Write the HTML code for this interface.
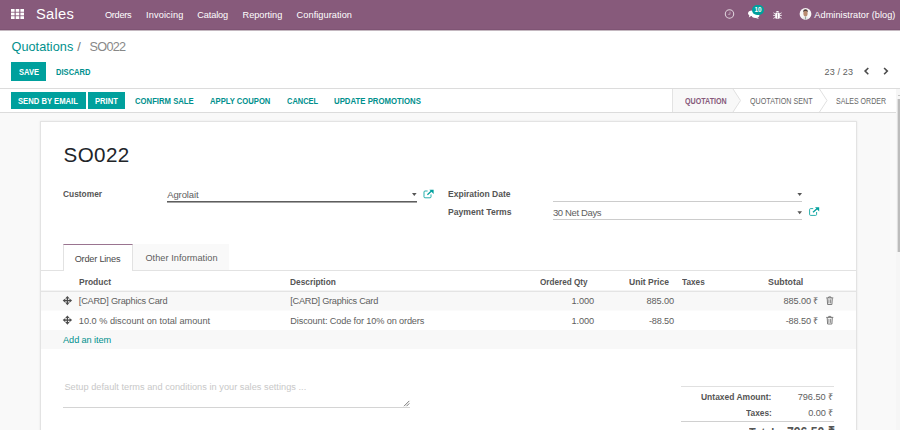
<!DOCTYPE html>
<html><head><meta charset="utf-8">
<style>
html,body{margin:0;padding:0;width:900px;height:430px;overflow:hidden;background:#f9f9f9;font-family:"Liberation Sans",sans-serif;}
.t{position:absolute;white-space:pre;line-height:1;font-family:"Liberation Sans",sans-serif;}
.a{position:absolute;}
</style></head><body>
<!-- navbar -->
<div class="a" style="left:0;top:0;width:900px;height:30px;background:#875A7B"></div>
<div class="a" style="left:0;top:29px;width:900px;height:1px;background:#7f5474"></div>
<div class="a" style="left:0;top:30px;width:900px;height:1px;background:#c4b8c0"></div>
<!-- grid icon -->
<svg class="a" style="left:11px;top:9px" width="13" height="10" viewBox="0 0 13 10">
<g fill="#fff">
<rect x="0" y="0" width="3.6" height="2.8"/><rect x="4.7" y="0" width="3.6" height="2.8"/><rect x="9.4" y="0" width="3.6" height="2.8"/>
<rect x="0" y="3.6" width="3.6" height="2.8"/><rect x="4.7" y="3.6" width="3.6" height="2.8"/><rect x="9.4" y="3.6" width="3.6" height="2.8"/>
<rect x="0" y="7.2" width="3.6" height="2.8"/><rect x="4.7" y="7.2" width="3.6" height="2.8"/><rect x="9.4" y="7.2" width="3.6" height="2.8"/>
</g></svg>
<!-- clock -->
<svg class="a" style="left:724px;top:9px" width="11" height="11" viewBox="0 0 11 11">
<circle cx="5.5" cy="5" r="4.2" fill="none" stroke="rgba(255,255,255,0.72)" stroke-width="1.1"/>
<path d="M6 2.6 L6 5.3 L3.9 5.3" stroke="rgba(255,255,255,0.6)" stroke-width="0.7" fill="none"/>
</svg>
<!-- chat -->
<svg class="a" style="left:748px;top:10px" width="12" height="9" viewBox="0 0 12 9">
<ellipse cx="4.3" cy="3.2" rx="4.2" ry="2.8" fill="#fff"/>
<path d="M1.5 5 L0.8 7.5 L3.8 5.6Z" fill="#fff"/>
<ellipse cx="7.5" cy="5.5" rx="3.8" ry="2.4" fill="#fff"/>
<path d="M9.3 7.2 L11 9 L7 7.8Z" fill="#fff"/>
</svg>
<div class="a" style="left:752px;top:5px;width:12px;height:10px;border-radius:5px;background:#00A09D"></div>
<span class="t" style="left:754.6px;top:7px;font-size:6.4px;font-weight:700;color:#fff;letter-spacing:-0.1px">10</span>
<!-- bug -->
<svg class="a" style="left:773px;top:10px" width="9" height="9" viewBox="0 0 9 9">
<path d="M2.6 2.3 Q4.5 -0.3 6.4 2.3Z" fill="#fff"/>
<rect x="2.2" y="2.7" width="4.6" height="6" rx="1.3" fill="#fff"/>
<path d="M0.4 2.8 L2.2 3.8 M0.2 5.4 L2.2 5.4 M0.4 8.4 L2.2 7.4 M8.6 2.8 L6.8 3.8 M8.8 5.4 L6.8 5.4 M8.6 8.4 L6.8 7.4" stroke="#fff" stroke-width="0.8"/>
<rect x="4.2" y="3.4" width="0.6" height="5" fill="#875A7B"/>
</svg>
<!-- avatar -->
<svg class="a" style="left:799px;top:7px" width="13" height="14" viewBox="0 0 13 14">
<circle cx="6.5" cy="6.9" r="5.9" fill="#f7f5f5"/>
<path d="M4.3 4.6 Q4.4 2.3 6.5 2.3 Q8.6 2.3 8.7 4.6 L8.6 5.2 L4.4 5.2Z" fill="#4a3a34"/>
<ellipse cx="6.5" cy="6.6" rx="2.1" ry="2.9" fill="#b98c70"/>
<path d="M4.5 4.3 Q6.5 3 8.5 4.3 L8.5 3.6 Q6.5 2.2 4.5 3.6Z" fill="#4a3a34"/>
<path d="M5.9 9.5 L7.1 9.5 L7.3 12.6 L5.7 12.6Z" fill="#9aa69c"/>
<path d="M3 11.5 Q4.5 10 5.8 9.8 L5.8 12.6 Z M10 11.5 Q8.5 10 7.2 9.8 L7.2 12.6Z" fill="#e6e6e6"/>
</svg>
<!-- control panel -->
<div class="a" style="left:0;top:31px;width:900px;height:57px;background:#fff"></div>
<div class="a" style="left:11px;top:62px;width:35px;height:19px;background:#00A09D"></div>
<!-- pager chevrons -->
<svg class="a" style="left:862px;top:66px" width="30" height="12" viewBox="0 0 30 12">
<path d="M6.3 2 L3.1 5.1 L6.3 8.2" fill="none" stroke="#4c4c4c" stroke-width="1.6"/>
<path d="M22.1 2 L25.3 5.1 L22.1 8.2" fill="none" stroke="#4c4c4c" stroke-width="1.6"/>
</svg>

<!-- statusbar -->
<div class="a" style="left:0;top:88px;width:896px;height:23px;background:#fff;border-top:1px solid #dcdcdc;border-bottom:1px solid #dcdcdc"></div>
<div class="a" style="left:11px;top:92px;width:75px;height:17px;background:#00A09D"></div>
<div class="a" style="left:88px;top:92px;width:37px;height:17px;background:#00A09D"></div>
<!-- status arrows -->
<svg class="a" style="left:672px;top:89px" width="224" height="23" viewBox="0 0 224 23">
<path d="M1 0 L61 0 L68.5 11.5 L61 23 L1 23Z" fill="#f8f8f8"/>
<path d="M0.5 0 L0.5 23" stroke="#e3e3e3" stroke-width="1"/>
<path d="M61 0 L68.5 11.5 L61 23" fill="none" stroke="#e0e0e0" stroke-width="1"/>
<path d="M147.5 0 L155 11.5 L147.5 23" fill="none" stroke="#e0e0e0" stroke-width="1"/>
</svg>

<!-- scrollbar -->
<div class="a" style="left:896px;top:89px;width:4px;height:341px;background:#f6f6f6"></div>
<div class="a" style="left:896px;top:88px;width:4px;height:1px;background:#dcdcdc"></div>
<div class="a" style="left:898px;top:95px;width:2px;height:1px;background:#c4c4c4"></div>
<div class="a" style="left:898px;top:99px;width:2px;height:153px;background:#bcbcbc"></div>
<div class="a" style="left:897px;top:99px;width:1px;height:153px;background:#e0e0e0"></div>

<!-- sheet -->
<div class="a" style="left:40px;top:121px;width:815px;height:320px;background:#fff;border:1px solid #e3e3e3;box-shadow:0 0 2px rgba(0,0,0,0.08)"></div>
<!-- fields -->
<div class="a" style="left:167px;top:201px;width:250px;height:1px;background:#5e5e5e"></div><div class="a" style="left:167px;top:202px;width:250px;height:1px;background:#a4a4a4"></div>
<div class="a" style="left:553px;top:201px;width:249px;height:1px;background:#ccc"></div>
<div class="a" style="left:553px;top:219px;width:249px;height:1px;background:#ccc"></div>
<svg class="a" style="left:0;top:0" width="900" height="430" viewBox="0 0 900 430">
<path d="M412 193 L416.6 193 L414.3 196Z" fill="#555"/>
<path d="M797.4 193 L802 193 L799.7 196Z" fill="#555"/>
<path d="M797.4 211.3 L802 211.3 L799.7 214.3Z" fill="#555"/>
<!-- ext links -->
<g id="ext">
<path d="M813.2 208.6 L810.6 208.6 Q809.6 208.6 809.6 209.6 L809.6 214.4 Q809.6 215.4 810.6 215.4 L815.6 215.4 Q816.6 215.4 816.6 214.4 L816.6 212" fill="none" stroke="#00A09D" stroke-width="0.85"/>
<path d="M813 212.3 L817.3 208.4" fill="none" stroke="#00A09D" stroke-width="1.3"/>
<path d="M815 207.3 L819.2 207.3 L819.2 211.5Z" fill="#00A09D"/>
</g>
<use href="#ext" x="-385.6" y="-17.6"/>
</svg>

<!-- tabs -->
<div class="a" style="left:133px;top:244px;width:96px;height:26px;background:#f9f9f9"></div>
<div class="a" style="left:41px;top:270px;width:815px;height:1px;background:#e2e2e2"></div>
<div class="a" style="left:63px;top:244px;width:68px;height:26px;background:#fff;border-left:1px solid #e2e2e2;border-right:1px solid #e2e2e2;border-top:1px solid #9a7490"></div>
<!-- table -->
<div class="a" style="left:41px;top:290px;width:815px;height:1px;background:#f4f4f4"></div><div class="a" style="left:41px;top:291px;width:815px;height:1px;background:#e4e4e4"></div>
<div class="a" style="left:41px;top:292px;width:815px;height:18px;background:#f8f8f8"></div><div class="a" style="left:41px;top:310px;width:815px;height:1px;background:#fbfbfb"></div>
<div class="a" style="left:41px;top:330px;width:815px;height:19px;background:#f8f8f8"></div>
<!-- move icons & trash -->
<svg class="a" style="left:0;top:0" width="900" height="430" viewBox="0 0 900 430">
<g id="mv" fill="#4c4c4c">
<path d="M67.4 296 L69.6 298.6 L65.2 298.6Z"/><path d="M67.4 305.2 L69.6 302.6 L65.2 302.6Z"/>
<path d="M62.7 300.6 L65.3 298.4 L65.3 302.8Z"/><path d="M72.1 300.6 L69.5 298.4 L69.5 302.8Z"/>
<rect x="66.75" y="297.5" width="1.3" height="6.2"/><rect x="64.3" y="299.95" width="6.2" height="1.3"/>
</g>
<use href="#mv" y="19.5"/>
<g id="tr" fill="none" stroke="#6e6e6e" stroke-width="0.9">
<path d="M826.2 297.9 L833.3 297.9"/>
<path d="M828.4 297.9 L828.7 296.9 L830.8 296.9 L831.1 297.9"/>
<path d="M827.2 298.2 L827.6 304.5 L831.9 304.5 L832.3 298.2"/>
<path d="M828.9 299.3 L828.9 303.4 M830.6 299.3 L830.6 303.4" stroke-width="0.8"/>
</g>
<use href="#tr" y="19.5"/>
<!-- notes -->
<rect x="63" y="407" width="347" height="1" fill="#d4d4d4"/>
<path d="M404 406.2 L409.3 400.9 M406.5 406.2 L409.3 403.4" stroke="#7a7a7a" stroke-width="1"/>
<!-- totals lines -->
<rect x="681" y="386" width="153" height="1" fill="#e0e0e0"/>
<rect x="681" y="421" width="153" height="1" fill="#d0d0d0"/>
</svg>
<span class="t" style="left:35.9px;top:7.0px;font-size:14.7px;font-weight:400;color:#fff;letter-spacing:0.28px;">Sales</span>
<span class="t" style="left:105.0px;top:11.0px;font-size:9.2px;font-weight:400;color:#fff;letter-spacing:-0.30px;">Orders</span>
<span class="t" style="left:146.1px;top:11.0px;font-size:9.2px;font-weight:400;color:#fff;letter-spacing:0.11px;">Invoicing</span>
<span class="t" style="left:197.2px;top:11.0px;font-size:9.2px;font-weight:400;color:#fff;letter-spacing:-0.11px;">Catalog</span>
<span class="t" style="left:242.5px;top:11.0px;font-size:9.2px;font-weight:400;color:#fff;letter-spacing:-0.00px;">Reporting</span>
<span class="t" style="left:296.6px;top:11.0px;font-size:9.2px;font-weight:400;color:#fff;letter-spacing:0.06px;">Configuration</span>
<span class="t" style="left:814.3px;top:11.0px;font-size:9.2px;font-weight:400;color:#fff;letter-spacing:0.05px;">Administrator (blog)</span>
<span class="t" style="left:11.5px;top:41.0px;font-size:12.7px;font-weight:400;color:#00908d;letter-spacing:0.04px;">Quotations</span>
<span class="t" style="left:77.3px;top:41.0px;font-size:12.7px;font-weight:400;color:#777;letter-spacing:0.00px;">/</span>
<span class="t" style="left:89.5px;top:41.0px;font-size:12.7px;font-weight:400;color:#888;letter-spacing:-0.71px;">SO022</span>
<span class="t" style="left:18.7px;top:68.0px;font-size:8.5px;font-weight:700;color:#fff;letter-spacing:0.00px;transform:scaleX(0.8885);transform-origin:0.00px 0;">SAVE</span>
<span class="t" style="left:55.6px;top:68.0px;font-size:8.5px;font-weight:700;color:#00908d;letter-spacing:0.00px;transform:scaleX(0.8915);transform-origin:0.00px 0;">DISCARD</span>
<span class="t" style="left:824.5px;top:68.0px;font-size:9px;font-weight:400;color:#5e5e5e;letter-spacing:0.16px;">23 / 23</span>
<span class="t" style="left:18.4px;top:97.0px;font-size:8.5px;font-weight:700;color:#fff;letter-spacing:0.00px;transform:scaleX(0.9022);transform-origin:0.00px 0;">SEND BY EMAIL</span>
<span class="t" style="left:94.7px;top:97.0px;font-size:8.5px;font-weight:700;color:#fff;letter-spacing:0.00px;transform:scaleX(0.8933);transform-origin:0.00px 0;">PRINT</span>
<span class="t" style="left:135.0px;top:97.0px;font-size:8.5px;font-weight:700;color:#00908d;letter-spacing:0.00px;transform:scaleX(0.9074);transform-origin:0.00px 0;">CONFIRM SALE</span>
<span class="t" style="left:210.0px;top:97.0px;font-size:8.5px;font-weight:700;color:#00908d;letter-spacing:0.00px;transform:scaleX(0.9003);transform-origin:0.00px 0;">APPLY COUPON</span>
<span class="t" style="left:287.0px;top:97.0px;font-size:8.5px;font-weight:700;color:#00908d;letter-spacing:0.00px;transform:scaleX(0.8801);transform-origin:0.00px 0;">CANCEL</span>
<span class="t" style="left:334.4px;top:97.0px;font-size:8.5px;font-weight:700;color:#00908d;letter-spacing:0.00px;transform:scaleX(0.9170);transform-origin:0.00px 0;">UPDATE PROMOTIONS</span>
<span class="t" style="left:684.7px;top:97.0px;font-size:8.5px;font-weight:700;color:#875A7B;letter-spacing:0.00px;transform:scaleX(0.8388);transform-origin:0.00px 0;">QUOTATION</span>
<span class="t" style="left:749.8px;top:97.0px;font-size:8.5px;font-weight:400;color:#666;letter-spacing:0.00px;transform:scaleX(0.8421);transform-origin:0.00px 0;">QUOTATION SENT</span>
<span class="t" style="left:835.5px;top:97.0px;font-size:8.5px;font-weight:400;color:#666;letter-spacing:0.00px;transform:scaleX(0.8272);transform-origin:0.00px 0;">SALES ORDER</span>
<span class="t" style="left:63.5px;top:145.0px;font-size:20.6px;font-weight:400;color:#212529;letter-spacing:0.41px;">SO022</span>
<span class="t" style="left:62.8px;top:189.0px;font-size:9.5px;font-weight:700;color:#555;letter-spacing:0.00px;transform:scaleX(0.8803);transform-origin:0.00px 0;">Customer</span>
<span class="t" style="left:167.2px;top:190.0px;font-size:9.5px;font-weight:400;color:#5e5e5e;letter-spacing:-0.11px;">Agrolait</span>
<span class="t" style="left:448.4px;top:189.0px;font-size:9.5px;font-weight:700;color:#555;letter-spacing:0.00px;transform:scaleX(0.8977);transform-origin:0.00px 0;">Expiration Date</span>
<span class="t" style="left:448.4px;top:207.0px;font-size:9.5px;font-weight:700;color:#555;letter-spacing:0.00px;transform:scaleX(0.9059);transform-origin:0.00px 0;">Payment Terms</span>
<span class="t" style="left:552.9px;top:208.0px;font-size:9.5px;font-weight:400;color:#5e5e5e;letter-spacing:-0.36px;">30 Net Days</span>
<span class="t" style="left:74.7px;top:255.0px;font-size:9.2px;font-weight:400;color:#4a4a4a;letter-spacing:-0.22px;">Order Lines</span>
<span class="t" style="left:145.4px;top:254.0px;font-size:9.2px;font-weight:400;color:#5e5e5e;letter-spacing:0.04px;">Other Information</span>
<span class="t" style="left:78.9px;top:278.0px;font-size:9.2px;font-weight:700;color:#555;letter-spacing:0.00px;transform:scaleX(0.9207);transform-origin:0.00px 0;">Product</span>
<span class="t" style="left:290.3px;top:278.0px;font-size:9.2px;font-weight:700;color:#555;letter-spacing:0.00px;transform:scaleX(0.9072);transform-origin:0.00px 0;">Description</span>
<span class="t" style="left:539.6px;top:278.0px;font-size:9.2px;font-weight:700;color:#555;letter-spacing:0.00px;transform:scaleX(0.8881);transform-origin:0.00px 0;">Ordered Qty</span>
<span class="t" style="left:628.6px;top:278.0px;font-size:9.2px;font-weight:700;color:#555;letter-spacing:0.00px;transform:scaleX(0.9304);transform-origin:0.00px 0;">Unit Price</span>
<span class="t" style="left:681.6px;top:278.0px;font-size:9.2px;font-weight:700;color:#555;letter-spacing:0.00px;transform:scaleX(0.8948);transform-origin:0.00px 0;">Taxes</span>
<span class="t" style="left:767.7px;top:278.0px;font-size:9.2px;font-weight:700;color:#555;letter-spacing:0.00px;transform:scaleX(0.9588);transform-origin:0.00px 0;">Subtotal</span>
<span class="t" style="left:78.8px;top:297.0px;font-size:9.2px;font-weight:400;color:#5e5e5e;letter-spacing:-0.22px;">[CARD] Graphics Card</span>
<span class="t" style="left:290.3px;top:297.0px;font-size:9.2px;font-weight:400;color:#5e5e5e;letter-spacing:-0.26px;">[CARD] Graphics Card</span>
<span class="t" style="left:571.6px;top:297.0px;font-size:9.2px;font-weight:400;color:#5e5e5e;letter-spacing:-0.12px;">1.000</span>
<span class="t" style="left:646.4px;top:297.0px;font-size:9.2px;font-weight:400;color:#5e5e5e;letter-spacing:-0.08px;">885.00</span>
<span class="t" style="left:783.4px;top:297.0px;font-size:9.2px;font-weight:400;color:#5e5e5e;letter-spacing:-0.09px;">885.00 ₹</span>
<span class="t" style="left:78.8px;top:317.0px;font-size:9.2px;font-weight:400;color:#5e5e5e;letter-spacing:-0.00px;">10.0 % discount on total amount</span>
<span class="t" style="left:290.3px;top:317.0px;font-size:9.2px;font-weight:400;color:#5e5e5e;letter-spacing:-0.14px;">Discount: Code for 10% on orders</span>
<span class="t" style="left:571.6px;top:317.0px;font-size:9.2px;font-weight:400;color:#5e5e5e;letter-spacing:-0.12px;">1.000</span>
<span class="t" style="left:649.0px;top:317.0px;font-size:9.2px;font-weight:400;color:#5e5e5e;letter-spacing:-0.19px;">-88.50</span>
<span class="t" style="left:785.7px;top:317.0px;font-size:9.2px;font-weight:400;color:#5e5e5e;letter-spacing:-0.13px;">-88.50 ₹</span>
<span class="t" style="left:63.1px;top:336.0px;font-size:9.2px;font-weight:400;color:#00908d;letter-spacing:-0.10px;">Add an item</span>
<span class="t" style="left:64.4px;top:383.0px;font-size:9.2px;font-weight:400;color:#c8c8c8;letter-spacing:0.03px;">Setup default terms and conditions in your sales settings ...</span>
<span class="t" style="left:701.2px;top:393.0px;font-size:9.2px;font-weight:700;color:#555;letter-spacing:0.00px;transform:scaleX(0.9229);transform-origin:0.00px 0;">Untaxed Amount:</span>
<span class="t" style="left:797.7px;top:393.0px;font-size:9.2px;font-weight:400;color:#5e5e5e;letter-spacing:-0.02px;">796.50 ₹</span>
<span class="t" style="left:746.0px;top:409.0px;font-size:9.2px;font-weight:700;color:#555;letter-spacing:0.00px;transform:scaleX(0.9095);transform-origin:0.00px 0;">Taxes:</span>
<span class="t" style="left:808.3px;top:409.0px;font-size:9.2px;font-weight:400;color:#5e5e5e;letter-spacing:-0.11px;">0.00 ₹</span>
<span class="t" style="left:748.9px;top:427.0px;font-size:12px;font-weight:700;color:#555;letter-spacing:0.00px;transform:scaleX(0.9131);transform-origin:0.00px 0;">Total:</span>
<span class="t" style="left:786.7px;top:424.0px;font-size:15px;font-weight:700;color:#555;letter-spacing:0.00px;transform:scaleX(0.8131);transform-origin:0.00px 0;">796.50 ₹</span>
</body></html>
